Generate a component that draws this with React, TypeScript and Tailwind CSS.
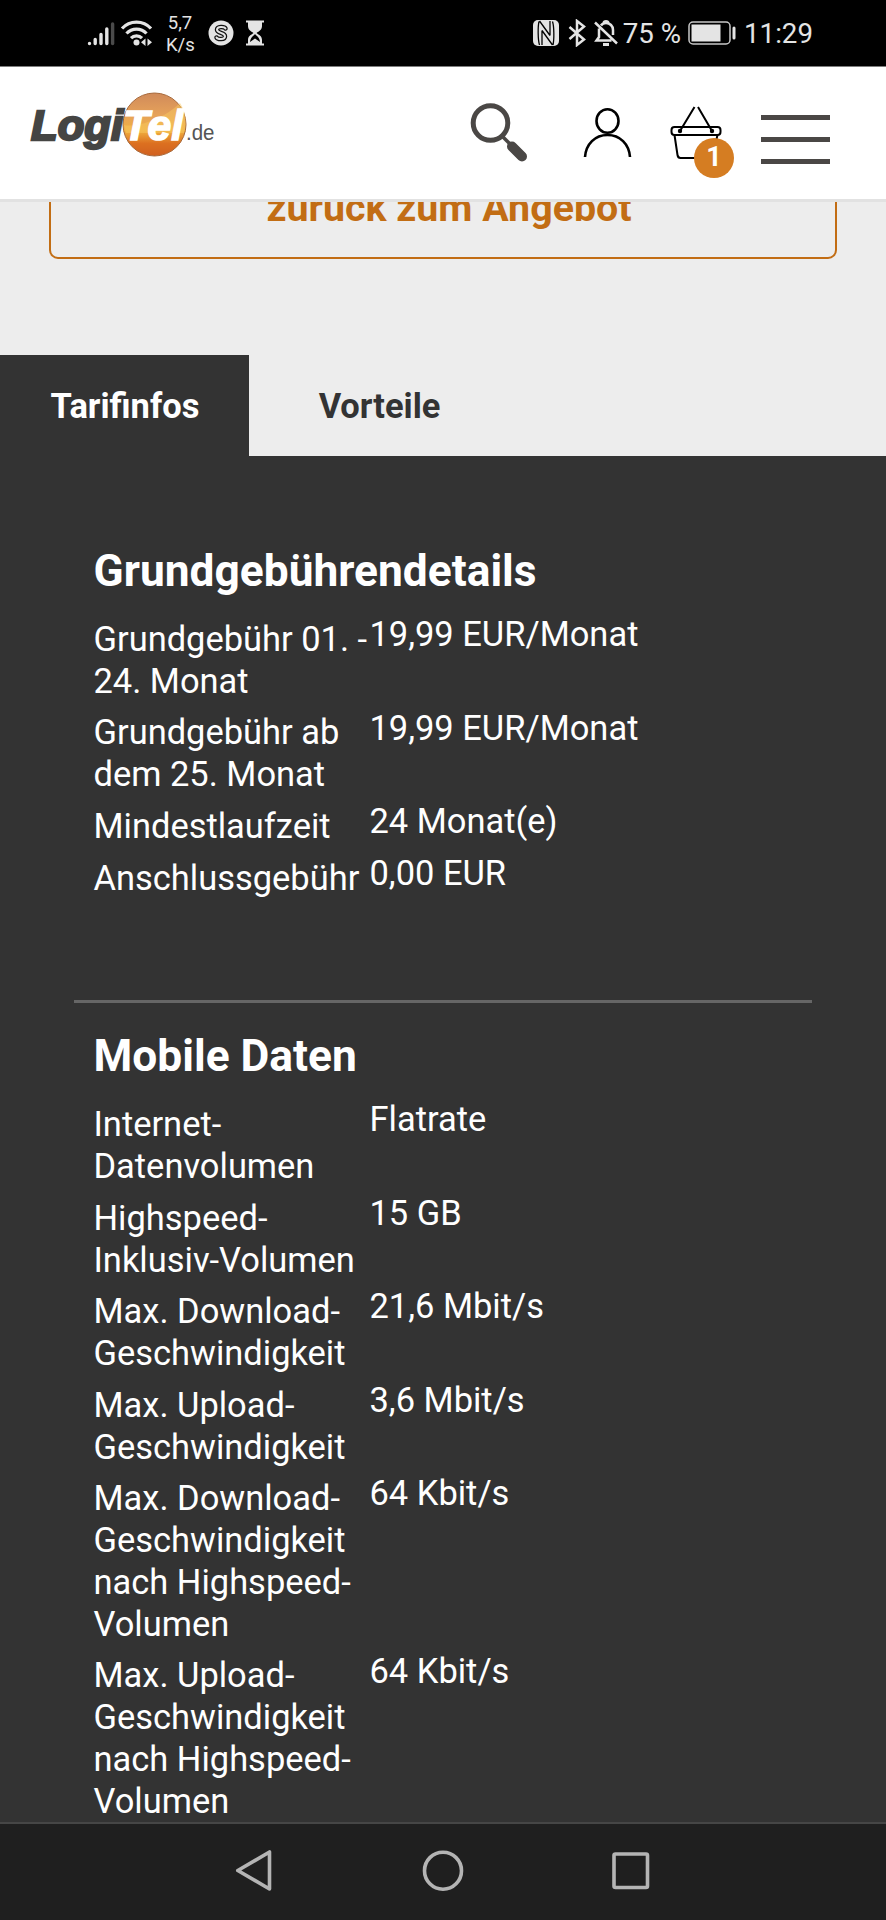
import React from 'react';

const feeRows = [
  { label: ['Grundgebühr 01. -', '24. Monat'], value: '19,99 EUR/Monat' },
  { label: ['Grundgebühr ab', 'dem 25. Monat'], value: '19,99 EUR/Monat' },
  { label: ['Mindestlaufzeit'], value: '24 Monat(e)' },
  { label: ['Anschlussgebühr'], value: '0,00 EUR' },
];

const dataRows = [
  { label: ['Internet-', 'Datenvolumen'], value: 'Flatrate' },
  { label: ['Highspeed-', 'Inklusiv-Volumen'], value: '15 GB' },
  { label: ['Max. Download-', 'Geschwindigkeit'], value: '21,6 Mbit/s' },
  { label: ['Max. Upload-', 'Geschwindigkeit'], value: '3,6 Mbit/s' },
  {
    label: ['Max. Download-', 'Geschwindigkeit', 'nach Highspeed-', 'Volumen'],
    value: '64 Kbit/s',
  },
  {
    label: ['Max. Upload-', 'Geschwindigkeit', 'nach Highspeed-', 'Volumen'],
    value: '64 Kbit/s',
  },
];

type Row = { label: string[]; value: string };

const DetailList: React.FC<{ title: string; rows: Row[] }> = ({ title, rows }) => (
  <section className="pl-[19.5px]">
    <h2 className="text-[44.3px] leading-[52px] font-bold mb-[17px]">{title}</h2>
    <dl>
      {rows.map((row) => (
        <div key={row.label.join(' ')} className="flex leading-[41.84px]">
          <dt className="w-[276px] shrink-0 py-[4.92px] whitespace-nowrap">
            {row.label.map((line) => (
              <span key={line} className="block">
                {line}
              </span>
            ))}
          </dt>
          <dd>{row.value}</dd>
        </div>
      ))}
    </dl>
  </section>
);

const StatusBar: React.FC = () => (
  <div className="h-[66px] shrink-0 bg-black text-[#e4e4e4] flex items-center justify-between pl-[86px] pr-[73px]">
    <div className="flex items-center">
      <svg width="30" height="30" viewBox="0 0 30 30" className="mr-1" strokeLinecap="round" strokeWidth="3.4" stroke="#e4e4e4">
        <path d="M3.5 25.5v.1M9.2 21.5v4M15 16.5v9M20.8 11v14.5" />
        <path d="M26.6 6v19.5" stroke="#4a4a4a" />
      </svg>
      <svg width="34" height="30" viewBox="0 0 34 30" className="mr-3" fill="none" stroke="#e4e4e4" strokeWidth="3.2">
        <path d="M2 10.5a19.5 19.5 0 0 1 29 0M6.5 15.5a13.5 13.5 0 0 1 20 0M11 20.2a7.7 7.7 0 0 1 11 0" />
        <circle cx="16.5" cy="24.5" r="3" fill="#e4e4e4" stroke="none" />
        <path d="M25.5 20.5v7.5l-4.5-3.7zM27.5 20.5v7.5l4.5-3.7z" fill="#e4e4e4" stroke="none" />
      </svg>
      <div className="w-[28px] mr-[14px] pt-[2px] text-center text-[18.5px] leading-[22px]">
        <div>5,7</div>
        <div>K/s</div>
      </div>
      <svg width="26" height="26" viewBox="0 0 26 26" className="mr-[11px]" fill="none">
        <circle cx="13" cy="13" r="12.5" fill="#e4e4e4" />
        <path d="M17.5 8.5c-1-2-8.5-2.5-8.5 1.3 0 3.6 8 2.5 8 6.4 0 3.9-7.5 3.3-8.5 1.3" stroke="#111" strokeWidth="4.5" strokeLinecap="round" />
        <path d="M17.5 8.5c-1-2-8.5-2.5-8.5 1.3 0 3.6 8 2.5 8 6.4 0 3.9-7.5 3.3-8.5 1.3" stroke="#e4e4e4" strokeWidth="2" strokeLinecap="round" />
      </svg>
      <svg width="20" height="26" viewBox="0 0 20 26">
        <path d="M1 1.5h18M1 24.5h18" stroke="#e4e4e4" strokeWidth="2.2" />
        <path d="M3 2h14v4c0 4-3 5-5.5 7 2.5 2 5.5 3 5.5 7v4H3v-4c0-4 3-5 5.5-7C6 11 3 10 3 6z" fill="#e4e4e4" />
        <path d="M10 14c-1.5 2-4.5 3-5 8l5-3.5 5 3.5c-.5-5-3.5-6-5-8z" fill="#000" />
      </svg>
    </div>

    <div className="flex items-center text-[27.7px] leading-[34px] whitespace-nowrap">
      {/* nfc */}
      <svg width="26" height="26" viewBox="0 0 26 26" className="mr-[9px]">
        <rect width="26" height="26" rx="5" fill="#e4e4e4" />
        <path
          d="M6 1.5c-1.2 5-1.2 18 .5 23.500M19.500 1.500c1.700 5 1.700 18 .5 23.500M9 10.500V25M17 1v14.500M6.500 1l10.500 14.500M19.500 25L9 10.500"
          fill="none"
          stroke="#000"
          strokeWidth="1.3"
        />
      </svg>
      <svg width="18" height="28" viewBox="0 0 18 28" className="mr-[8px]" fill="none" stroke="#e4e4e4" strokeWidth="2.5">
        <path d="M1.5 8l14.5 12.5-7 5.5V2l7 5.5L1.5 20" />
      </svg>
      <svg width="24" height="28" viewBox="0 0 24 28" className="mr-[5px]" fill="none" stroke="#e4e4e4" strokeWidth="2.5">
        <path d="M1 3.5l22 21M7 6.5C8 5 10 4 12 4c4 0 7 3 7 7v5M5 9.5V18l-2.5 3.5h15M9.5 4.5C10 1.5 14 1.5 14.5 4.5" />
        <path d="M9 25.5h6" strokeWidth="3" />
      </svg>
      <span className="mr-[7px] pt-px">75 %</span>
      <svg width="48" height="24" viewBox="0 0 48 24" className="mr-[8px]">
        <rect x="1" y="1" width="41" height="22" rx="4" fill="none" stroke="#c8c8c8" strokeWidth="1.5" />
        <rect x="3.5" y="3.5" width="29" height="17" fill="#e4e4e4" />
        <rect x="44.5" y="5.5" width="3" height="13" rx="1.5" fill="#e4e4e4" />
      </svg>
      <span className="pt-px">11:29</span>
    </div>
  </div>
);

const Logo: React.FC = () => (
  <svg width="190" height="74" viewBox="28 86 190 74">
    <defs>
      <linearGradient id="ball" x1="0" y1="0" x2="0" y2="1">
        <stop offset="0" stopColor="#d08a5a" />
        <stop offset="0.35" stopColor="#e6a25a" />
        <stop offset="0.6" stopColor="#f0b040" />
        <stop offset="0.8" stopColor="#dc7020" />
        <stop offset="1" stopColor="#d06020" />
      </linearGradient>
    </defs>
    <circle cx="154.5" cy="124.5" r="31.5" fill="url(#ball)" stroke="#a86a3c" strokeWidth="1" />
    <path d="M124 125c12 3 40-6 56-22 6 9 7 20 4 30H126z" fill="#f8c860" opacity="0.5" />
    <g fontFamily="Liberation Sans" fontWeight="bold" fontStyle="italic" fontSize="42.5">
      <text x="31" y="139.5" textLength="92" lengthAdjust="spacingAndGlyphs" fill="#454543" stroke="#454543" strokeWidth="2.4">
        Logi
      </text>
      <text x="123" y="139.5" textLength="60" lengthAdjust="spacingAndGlyphs" fill="#fff" stroke="#fff" strokeWidth="1.6">
        Tel
      </text>
    </g>
    <text x="186" y="139.5" textLength="28.5" lengthAdjust="spacingAndGlyphs" fontFamily="Liberation Sans" fontSize="22.5" fill="#555">
      .de
    </text>
  </svg>
);

const Header: React.FC = () => (
  <header className="h-[136px] shrink-0 bg-white border-t border-t-[#7d7d7d] border-b-[3px] border-b-[#e2e2e2] flex items-start pl-[28px] pr-[56px]">
    <div className="mt-[19px] flex-1">
      <Logo />
    </div>
    {/* search */}
    <svg width="60" height="62" viewBox="0 0 60 62" className="mt-[34px] mr-[53px]">
      <circle cx="20.5" cy="22" r="17.3" fill="none" stroke="#4a4745" strokeWidth="5" />
      <path d="M32 35l8 8" stroke="#4a4745" strokeWidth="3.5" />
      <path d="M42 45.5l10 10" stroke="#4a4745" strokeWidth="10" strokeLinecap="round" />
    </svg>
    {/* account */}
    <svg width="50" height="52" viewBox="0 0 50 52" className="mt-[40px] mr-[37px]" fill="none" stroke="#000" strokeWidth="2.6">
      <ellipse cx="24.5" cy="14" rx="11" ry="11.7" />
      <path d="M2 50c1-13 10-22 22.5-22s21.5 9 22.500 22" />
    </svg>
    {/* basket */}
    <div className="relative mt-[38px] mr-[27px]">
      <svg width="64" height="56" viewBox="0 0 64 56" fill="none" stroke="#000" strokeWidth="2">
        <path d="M24.5 2L10 26M28 2l14 24" />
        <rect x="1.5" y="22" width="49" height="8" rx="3" />
        <path d="M4.5 30l3 20q.5 3 3 3H42l5.5-23" />
        <circle cx="10" cy="26" r="2.2" fill="#000" stroke="none" />
        <circle cx="42" cy="26" r="2.2" fill="#000" stroke="none" />
      </svg>
      <span className="absolute left-[24px] top-[32.5px] size-[40px] rounded-full bg-[#d57d22] text-white font-bold text-[27px] leading-[38px] text-center">
        1
      </span>
    </div>
    {/* menu */}
    <div className="mt-[48px] w-[69px] flex flex-col gap-[17px]">
      <span className="h-[5px] bg-[#4a4745]" />
      <span className="h-[5px] bg-[#4a4745]" />
      <span className="h-[5px] bg-[#4a4745]" />
    </div>
  </header>
);

const NavBar: React.FC = () => (
  <nav className="h-[98px] shrink-0 bg-[#1f1f1f] border-t-[2px] border-[#464646] flex justify-center gap-[146px] pt-[26px]">
    <svg width="42" height="42" viewBox="0 0 42 42" fill="none" stroke="#b4b4b4" strokeWidth="3.6" strokeLinejoin="round">
      <path d="M35.5 2v37L3.8 20.5z" />
    </svg>
    <svg width="42" height="42" viewBox="0 0 42 42" fill="none" stroke="#b4b4b4" strokeWidth="3.6">
      <circle cx="21" cy="20.7" r="18.5" />
    </svg>
    <svg width="42" height="42" viewBox="0 0 42 42" fill="none" stroke="#b4b4b4" strokeWidth="3.6">
      <rect x="4" y="4" width="33.5" height="33.5" rx="1.5" />
    </svg>
  </nav>
);

export default function App() {
  return (
    <main className="w-[886px] h-[1920px] overflow-hidden flex flex-col bg-[#ededed] font-['Roboto',sans-serif]">
      <StatusBar />
      <Header />

      {/* the button is scrolled halfway under the header */}
      <div className="h-[153px] shrink-0 overflow-hidden flex flex-col px-[49px]">
        <button className="-mt-[42px] h-[99px] shrink-0 pl-[12px] pb-[4px] rounded-[9px] border-[2.5px] border-[#c26d14] text-[#c26d14] text-[39.38px] font-bold">
          zurück zum Angebot
        </button>
      </div>

      <div className="h-[101px] shrink-0 flex text-[34.46px] leading-[102px] font-bold text-[#333]">
        <button className="w-[249px] pl-[1px] bg-[#333] text-white">Tarifinfos</button>
        <button className="w-[261px]">Vorteile</button>
      </div>

      <div className="h-[1366px] shrink-0 bg-[#333] text-white text-[34.46px] px-[74px] pt-[89px] overflow-hidden">
        <DetailList title="Grundgebührendetails" rows={feeRows} />
        <hr className="mt-[96px] mb-[27px] h-[3px] border-0 bg-[#666]" />
        <DetailList title="Mobile Daten" rows={dataRows} />
      </div>

      <NavBar />
    </main>
  );
}
